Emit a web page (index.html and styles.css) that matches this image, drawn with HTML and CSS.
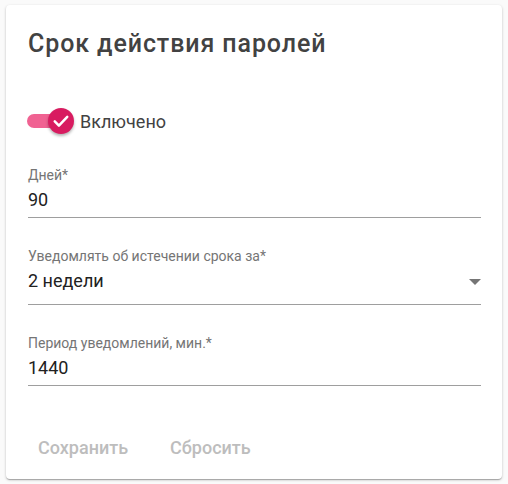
FILE: index.html
```html
<!DOCTYPE html>
<html lang="ru">
<head>
  <meta charset="UTF-8">
  <meta name="viewport" content="width=device-width, initial-scale=1.0">
  <title>Срок действия паролей</title>
  <link rel="stylesheet" href="styles.css">
</head>
<body>

  <div class="card">
    <h2 class="card-title">Срок действия паролей</h2>

    <!-- Toggle -->
    <label class="toggle-row">
      <span class="toggle">
        <span class="toggle-track"></span>
        <span class="toggle-thumb">
          <svg width="20" height="20" viewBox="0 0 24 24"><path d="M4.5 12.5l5 5L19.5 7" fill="none" stroke="#fff" stroke-width="3" stroke-linecap="round" stroke-linejoin="round"/></svg>
        </span>
      </span>
      <span class="toggle-label">Включено</span>
    </label>

    <!-- Fields -->
    <div class="field">
      <div class="field-label">Дней*</div>
      <div class="field-value">90</div>
    </div>

    <div class="field field-select">
      <div class="field-label">Уведомлять об истечении срока за*</div>
      <div class="field-value">
        <span>2 недели</span>
        <span class="arrow"></span>
      </div>
    </div>

    <div class="field">
      <div class="field-label">Период уведомлений, мин.*</div>
      <div class="field-value">1440</div>
    </div>

    <div class="actions">
      <button type="button" class="btn" disabled>Сохранить</button>
      <button type="button" class="btn" disabled>Сбросить</button>
    </div>
  </div>

</body>
</html>
```

FILE: styles.css
```css
body {
  font-family: Roboto, "Noto Sans", sans-serif;
  margin: 0;
  padding: 5px 6px;
  background-color: #fafafa;
}
.card {
  background-color: white;
  border-radius: 4px;
  box-shadow: 0 1px 3px rgba(0, 0, 0, 0.2), 0 1px 1px rgba(0, 0, 0, 0.14), 0 2px 1px -1px rgba(0, 0, 0, 0.12);
  padding: 23px 21px 15px 22px;
  height: 436px;
}
.card-title {
  margin: 0;
  font-size: 25px;
  line-height: 32px;
  font-weight: 500;
  letter-spacing: 0.9px;
  color: #424242;
}
.toggle-row {
  display: flex;
  align-items: center;
  height: 26px;
  margin-top: 48px;
}
.toggle {
  position: relative;
  width: 47px;
  height: 26px;
  margin-left: -1px;
}
.toggle-track {
  display: block;
  margin-top: 6px;
  width: 36px;
  height: 14px;
  border-radius: 7px;
  background-color: #f06292;
}
.toggle-thumb {
  position: absolute;
  left: 21px;
  top: 0;
  width: 26px;
  height: 26px;
  border-radius: 50%;
  background-color: #d81b60;
  box-shadow: 0 2px 3px rgba(0, 0, 0, 0.3);
  display: flex;
  align-items: center;
  justify-content: center;
}
.toggle-label {
  margin-left: 6px;
  font-size: 18px;
  color: #424242;
}
.field {
  margin-top: 33px;
  border-bottom: 1px solid #9e9e9e;
  padding-bottom: 5px;
}
.field + .field {
  margin-top: 30px;
}
.field-label {
  font-size: 14px;
  line-height: 16px;
  color: #757575;
}
.field-value {
  margin-top: 5px;
  font-size: 18px;
  line-height: 24px;
  color: #212121;
}
.field-select {
  padding-bottom: 11px;
}
.field-select .field-value {
  display: flex;
  align-items: center;
  justify-content: space-between;
}
.arrow {
  width: 0;
  height: 0;
  border-left: 6px solid transparent;
  border-right: 6px solid transparent;
  border-top: 6px solid #757575;
  margin-top: 2px;
}
.actions {
  display: flex;
  gap: 10px;
  margin-top: 43px;
  margin-left: -6px;
}
.btn {
  font-family: Roboto, sans-serif;
  font-size: 18px;
  font-weight: 500;
  color: #bdbdbd;
  background: none;
  border: none;
  padding: 0 16px;
  height: 36px;
}
```
